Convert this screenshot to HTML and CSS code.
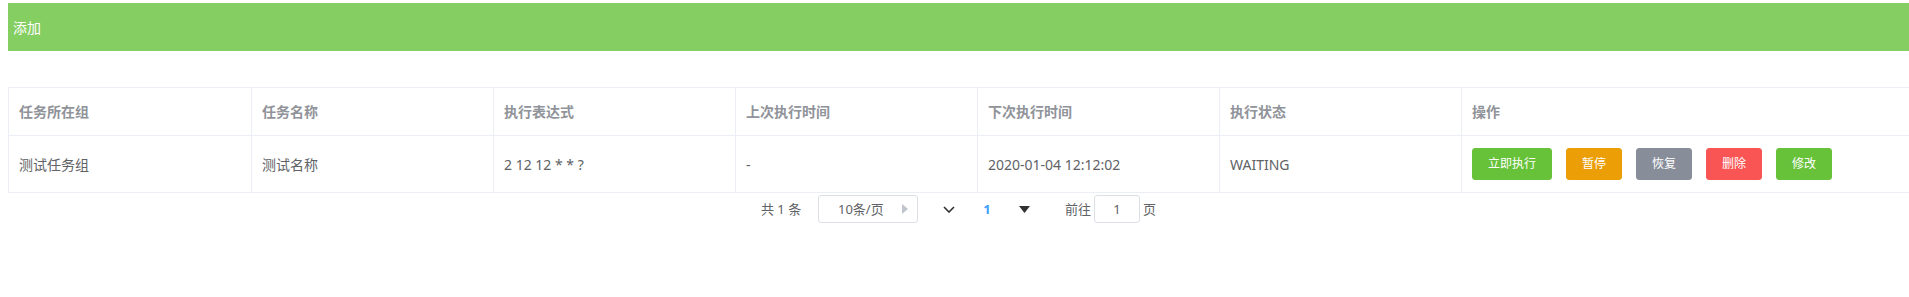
FILE: index.html
```html
<!DOCTYPE html>
<html lang="zh-CN">
<head>
    <meta charset="UTF-8">
    <title>定时任务</title>
    <link rel="stylesheet" href="styles.css">
</head>
<body>
    <div class="page">
        <div class="toolbar">
            <span class="toolbar-text">添加</span>
        </div>

        <div class="table-wrap">
            <table class="task-table">
                <thead>
                    <tr>
                        <th class="col-first"><div class="cell">任务所在组</div></th>
                        <th class="col"><div class="cell">任务名称</div></th>
                        <th class="col"><div class="cell">执行表达式</div></th>
                        <th class="col"><div class="cell">上次执行时间</div></th>
                        <th class="col"><div class="cell">下次执行时间</div></th>
                        <th class="col"><div class="cell">执行状态</div></th>
                        <th class="col-last"><div class="cell">操作</div></th>
                    </tr>
                </thead>
                <tbody>
                    <tr>
                        <td><div class="cell">测试任务组</div></td>
                        <td><div class="cell">测试名称</div></td>
                        <td><div class="cell">2 12 12 * * ?</div></td>
                        <td><div class="cell">-</div></td>
                        <td><div class="cell">2020-01-04 12:12:02</div></td>
                        <td><div class="cell">WAITING</div></td>
                        <td>
                            <div class="cell actions">
                                <button class="btn btn-success">立即执行</button>
                                <button class="btn btn-warning">暂停</button>
                                <button class="btn btn-info">恢复</button>
                                <button class="btn btn-danger">删除</button>
                                <button class="btn btn-success">修改</button>
                            </div>
                        </td>
                    </tr>
                </tbody>
            </table>
        </div>

        <div class="pagination">
            <span class="pg-total">共 1 条</span>
            <div class="pg-sizes">
                <span class="pg-sizes-text">10条/页</span>
                <svg class="pg-sizes-arrow" width="6" height="10" viewBox="0 0 6 10">
                    <polygon points="0,0 6,5 0,10" fill="#c0c4cc"/>
                </svg>
            </div>
            <button class="pg-btn pg-prev">
                <svg width="12" height="7" viewBox="0 0 12 7">
                    <polyline points="1,1 6,6 11,1" fill="none" stroke="#303133" stroke-width="1.6"/>
                </svg>
            </button>
            <span class="pg-pager">1</span>
            <button class="pg-btn pg-next">
                <svg width="11" height="7" viewBox="0 0 11 7">
                    <polygon points="0,0 11,0 5.5,7" fill="#303133"/>
                </svg>
            </button>
            <span class="pg-jump">前往</span>
            <input class="pg-input" type="text" value="1">
            <span class="pg-unit">页</span>
        </div>
    </div>
</body>
</html>
```

FILE: styles.css
```css
* {
    box-sizing: border-box;
}

html, body {
    overflow: hidden;
}

body {
    margin: 0;
    font-family: "Noto Sans", "Noto Sans CJK SC", sans-serif;
    color: #606266;
    background: #ffffff;
}

.page {
    padding: 3px 0 0 8px;
}

.toolbar {
    height: 48px;
    background: #85ce61;
    display: flex;
    align-items: center;
    padding-left: 5px;
}

.toolbar-text {
    color: #ffffff;
    font-size: 14px;
}

.table-wrap {
    margin-top: 36px;
}

.task-table {
    width: 100%;
    table-layout: fixed;
    border-collapse: separate;
    border-spacing: 0;
    border-top: 1px solid #ebeef5;
    border-left: 1px solid #ebeef5;
    font-size: 14px;
}

.task-table th,
.task-table td {
    padding: 12px 0;
    border-right: 1px solid #ebeef5;
    border-bottom: 1px solid #ebeef5;
    text-align: left;
    vertical-align: middle;
}

.task-table th:last-child,
.task-table td:last-child {
    border-right: none;
}

.task-table .col-first {
    width: 243px;
}

.task-table .col {
    width: 242px;
}

.task-table th {
    color: #909399;
    font-weight: bold;
}

.cell {
    padding: 0 10px;
    line-height: 23px;
    white-space: nowrap;
}

.actions {
    display: flex;
    gap: 14px;
}

.btn {
    height: 32px;
    padding: 0 15px;
    font-family: inherit;
    font-size: 12px;
    line-height: 30px;
    color: #ffffff;
    border: 1px solid transparent;
    border-radius: 3px;
    cursor: pointer;
}

.btn-success {
    background: #67c23a;
    border-color: #67c23a;
}

.btn-warning {
    background: #eb9e05;
    border-color: #eb9e05;
}

.btn-info {
    background: #878d99;
    border-color: #878d99;
}

.btn-danger {
    background: #fa5555;
    border-color: #fa5555;
}

.pagination {
    display: flex;
    justify-content: center;
    align-items: center;
    height: 28px;
    margin-top: 2px;
    font-size: 13px;
    color: #606266;
}

.pg-total {
    width: 57px;
    line-height: 28px;
}

.pg-sizes {
    width: 100px;
    height: 28px;
    border: 1px solid #dcdfe6;
    border-radius: 3px;
    display: flex;
    align-items: center;
    padding: 0 9px 0 19px;
}

.pg-sizes-text {
    flex: 1;
    line-height: 26px;
}

.pg-btn {
    width: 36px;
    height: 28px;
    padding: 0;
    border: none;
    background: transparent;
    display: flex;
    align-items: center;
    justify-content: center;
}

.pg-prev {
    margin-left: 13px;
}

.pg-pager {
    width: 40px;
    text-align: center;
    line-height: 28px;
    color: #409eff;
    font-weight: bold;
}

.pg-jump {
    margin-left: 22px;
    line-height: 28px;
}

.pg-input {
    width: 46px;
    height: 28px;
    margin: 0 3px;
    border: 1px solid #dcdfe6;
    border-radius: 3px;
    font-family: inherit;
    font-size: 13px;
    color: #606266;
    text-align: center;
    outline: none;
}

.pg-unit {
    line-height: 28px;
}
```
